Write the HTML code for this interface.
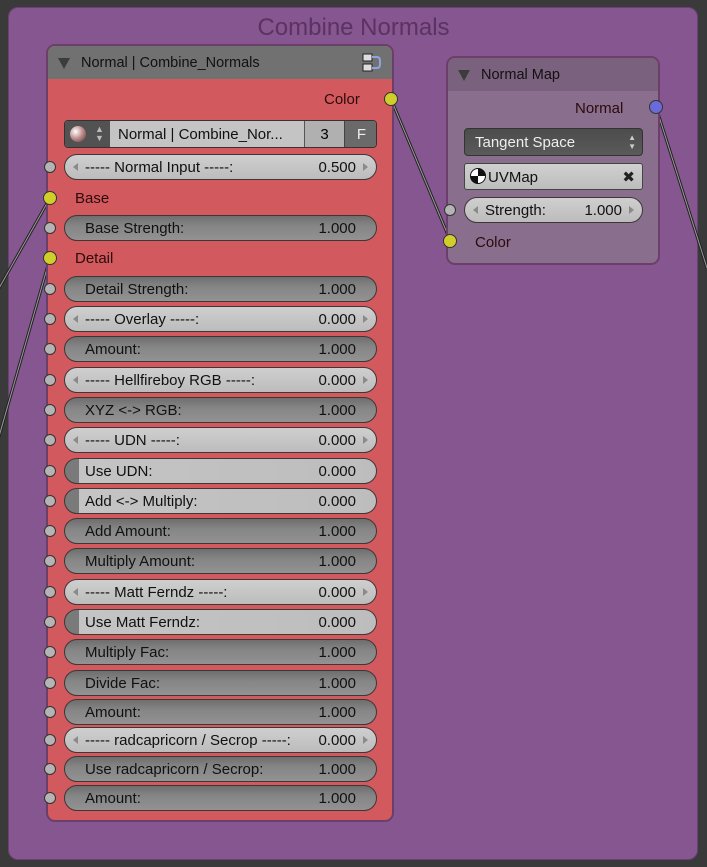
<!DOCTYPE html>
<html><head><meta charset="utf-8"><style>
*{box-sizing:border-box;margin:0;padding:0}
body{width:707px;height:867px;overflow:hidden;background:#3a3a3a;font-family:"Liberation Sans","DejaVu Sans",sans-serif;font-size:14px;position:relative}
.abs{position:absolute}
.frame{left:8px;top:7px;width:690px;height:853px;background:#85568f;border-radius:10px;border:1px solid #6a4272}
.title{left:0;width:707px;top:14px;text-align:center;font-size:24px;color:#5b3262}
.node{background:#d2595d;border-radius:9px;border:2px solid #6c3f6a;overflow:hidden}
.hdr{position:absolute;left:0;right:0;top:0;height:33px;background:#717171;color:#111;font-size:14.5px;line-height:35px;padding-left:33px}
.tri{position:absolute;left:10px;top:12px;width:0;height:0;border-left:6px solid transparent;border-right:6px solid transparent;border-top:11px solid #3c3c3c}
.f{position:absolute;height:26px;border-radius:13px;border:1px solid #3f3636;color:#111;font-size:15px;line-height:26px;padding:0 20px 0 20px}
.d{background:linear-gradient(#6e6e6e,#858585 40%,#929292);}
.l{background:linear-gradient(#cfcfcf,#bcbcbc);}
.f .v{position:absolute;right:20px;top:0}
.f .la{position:absolute;left:8px;top:8px;border-top:4px solid transparent;border-bottom:4px solid transparent;border-right:5px solid #8a8a8a}
.f .ra{position:absolute;right:8px;top:8px;border-top:4px solid transparent;border-bottom:4px solid transparent;border-left:5px solid #8a8a8a}
.p{background:linear-gradient(90deg,#7a7a7a 0,#7a7a7a 14px,#c4c4c4 14px,#bdbdbd)}
.s{position:absolute;width:12px;height:12px;border-radius:50%;border:1px solid #333;background:#b4b4b4}
.y{background:#d1ce2c}
.b{background:#6a6bd8}
.lbl{position:absolute;color:#2a0c0c;font-size:15px}
</style></head><body>
<div class="abs frame"></div>
<div class="abs title">Combine Normals</div>

<svg class="abs" style="left:0;top:0" width="707" height="867">
<g stroke="#222" stroke-width="3" fill="none">
<line x1="391" y1="99" x2="450" y2="240"/><line x1="656" y1="107" x2="707" y2="268"/>
<line x1="50" y1="198" x2="-2" y2="290"/><line x1="50" y1="258" x2="-2" y2="440"/></g>
<g stroke="#9a9a9a" stroke-width="1" fill="none">
<line x1="391" y1="99" x2="450" y2="240"/><line x1="656" y1="107" x2="707" y2="268"/>
<line x1="50" y1="198" x2="-2" y2="290"/><line x1="50" y1="258" x2="-2" y2="440"/></g>
</svg>

<div class="abs node" style="left:46px;top:44px;width:348px;height:778px">
<div class="hdr"><div class="tri"></div>Normal | Combine_Normals
<svg style="position:absolute;right:10px;top:7px" width="22" height="20"><rect x="3" y="1" width="9" height="7" fill="#ddd" stroke="#222"/><rect x="3" y="11" width="9" height="7" fill="#ddd" stroke="#222"/><path d="M12 4h5q3 0 3 4v3q0 4-3 4h-5" stroke="#8fa3e0" stroke-width="2" fill="none"/></svg></div>
</div>
<div class="lbl" style="left:324px;top:91px">Color</div>
<div class="abs" style="left:64px;top:120px;width:313px;height:28px;border:1px solid #3a3030;border-radius:4px;overflow:hidden;background:#c4c4c4">
<div class="abs" style="left:0;top:0;width:45px;height:26px;background:#525252"></div>
<div class="abs" style="left:5px;top:5px;width:16px;height:16px;border-radius:50%;background:radial-gradient(circle at 35% 35%,#fff,#b88 50%,#533)"></div>
<div class="abs" style="left:30px;top:4px;color:#bbb;font-size:9px;line-height:9px">▲<br>▼</div>
<div class="abs" style="left:53px;top:5px;font-size:15px;color:#111">Normal | Combine_Nor...</div>
<div class="abs" style="left:239px;top:0;width:40px;height:26px;border-left:1px solid #555;background:#b0b0b0;text-align:center;line-height:27px;font-size:15px">3</div>
<div class="abs" style="left:279px;top:0;width:34px;height:26px;background:#6a6a6a;color:#eee;text-align:center;line-height:27px;border-left:1px solid #444;font-size:15px">F</div>
</div>

<div class="f l" style="left:64px;top:154px;width:313px"><span class="la"></span>----- Normal Input -----:<span class="v">0.500</span><span class="ra"></span></div>
<div class="lbl" style="left:75px;top:190px">Base</div>
<div class="f d" style="left:64px;top:215px;width:313px">Base Strength:<span class="v">1.000</span></div>
<div class="lbl" style="left:75px;top:250px">Detail</div>
<div class="f d" style="left:64px;top:276px;width:313px">Detail Strength:<span class="v">1.000</span></div>
<div class="f l" style="left:64px;top:306px;width:313px"><span class="la"></span>----- Overlay -----:<span class="v">0.000</span><span class="ra"></span></div>
<div class="f d" style="left:64px;top:336px;width:313px">Amount:<span class="v">1.000</span></div>
<div class="f l" style="left:64px;top:367px;width:313px"><span class="la"></span>----- Hellfireboy RGB -----:<span class="v">0.000</span><span class="ra"></span></div>
<div class="f d" style="left:64px;top:397px;width:313px">XYZ &lt;-&gt; RGB:<span class="v">1.000</span></div>
<div class="f l" style="left:64px;top:427px;width:313px"><span class="la"></span>----- UDN -----:<span class="v">0.000</span><span class="ra"></span></div>
<div class="f p" style="left:64px;top:458px;width:313px">Use UDN:<span class="v">0.000</span></div>
<div class="f p" style="left:64px;top:488px;width:313px">Add &lt;-&gt; Multiply:<span class="v">0.000</span></div>
<div class="f d" style="left:64px;top:518px;width:313px">Add Amount:<span class="v">1.000</span></div>
<div class="f d" style="left:64px;top:548px;width:313px">Multiply Amount:<span class="v">1.000</span></div>
<div class="f l" style="left:64px;top:579px;width:313px"><span class="la"></span>----- Matt Ferndz -----:<span class="v">0.000</span><span class="ra"></span></div>
<div class="f p" style="left:64px;top:609px;width:313px">Use Matt Ferndz:<span class="v">0.000</span></div>
<div class="f d" style="left:64px;top:639px;width:313px">Multiply Fac:<span class="v">1.000</span></div>
<div class="f d" style="left:64px;top:670px;width:313px">Divide Fac:<span class="v">1.000</span></div>
<div class="f d" style="left:64px;top:699px;width:313px">Amount:<span class="v">1.000</span></div>
<div class="f l" style="left:64px;top:727px;width:313px"><span class="la"></span>----- radcapricorn / Secrop -----:<span class="v">0.000</span><span class="ra"></span></div>
<div class="f d" style="left:64px;top:756px;width:313px">Use radcapricorn / Secrop:<span class="v">1.000</span></div>
<div class="f d" style="left:64px;top:785px;width:313px">Amount:<span class="v">1.000</span></div>

<div class="s" style="left:44px;top:161px"></div>
<div class="s y" style="left:43px;top:191px;width:14px;height:14px"></div>
<div class="s" style="left:44px;top:222px"></div>
<div class="s y" style="left:43px;top:251px;width:14px;height:14px"></div>
<div class="s" style="left:44px;top:283px"></div>
<div class="s" style="left:44px;top:313px"></div>
<div class="s" style="left:44px;top:343px"></div>
<div class="s" style="left:44px;top:374px"></div>
<div class="s" style="left:44px;top:404px"></div>
<div class="s" style="left:44px;top:434px"></div>
<div class="s" style="left:44px;top:465px"></div>
<div class="s" style="left:44px;top:495px"></div>
<div class="s" style="left:44px;top:525px"></div>
<div class="s" style="left:44px;top:555px"></div>
<div class="s" style="left:44px;top:586px"></div>
<div class="s" style="left:44px;top:616px"></div>
<div class="s" style="left:44px;top:646px"></div>
<div class="s" style="left:44px;top:677px"></div>
<div class="s" style="left:44px;top:706px"></div>
<div class="s" style="left:44px;top:734px"></div>
<div class="s" style="left:44px;top:763px"></div>
<div class="s" style="left:44px;top:792px"></div>
<div class="s y" style="left:384px;top:92px;width:14px;height:14px"></div>

<div class="abs node" style="left:446px;top:56px;width:214px;height:209px;background:#8a6e8d">
<div class="hdr" style="background:#7a617e"><div class="tri"></div>Normal Map</div></div>
<div class="lbl" style="left:575px;top:100px">Normal</div>
<div class="abs" style="left:464px;top:128px;width:179px;height:28px;background:linear-gradient(#4c4c4c,#5a5a5a);border:1px solid #333;border-radius:4px;color:#eee;font-size:15px;line-height:28px;padding-left:10px">Tangent Space<span style="position:absolute;right:6px;top:4px;font-size:8px;line-height:9px;color:#ccc">▲<br>▼</span></div>
<div class="abs" style="left:464px;top:163px;width:179px;height:27px;background:linear-gradient(#d0d0d0,#bdbdbd);border:1px solid #444;border-radius:3px;color:#111;font-size:15px;line-height:27px;padding-left:23px">UVMap
<span style="position:absolute;left:5px;top:4px;width:16px;height:16px;border-radius:50%;border:1px solid #111;background:conic-gradient(#111 0 25%,#fff 0 50%,#111 0 75%,#fff 0)"></span>
<span style="position:absolute;right:7px;top:0;font-weight:bold;color:#222">✖</span></div>
<div class="f l" style="left:464px;top:197px;width:179px"><span class="la"></span>Strength:<span class="v">1.000</span><span class="ra"></span></div>
<div class="lbl" style="left:475px;top:234px">Color</div>
<div class="s" style="left:444px;top:204px"></div>
<div class="s y" style="left:443px;top:234px;width:14px;height:14px"></div>
<div class="s b" style="left:649px;top:100px;width:14px;height:14px"></div>
</body></html>
